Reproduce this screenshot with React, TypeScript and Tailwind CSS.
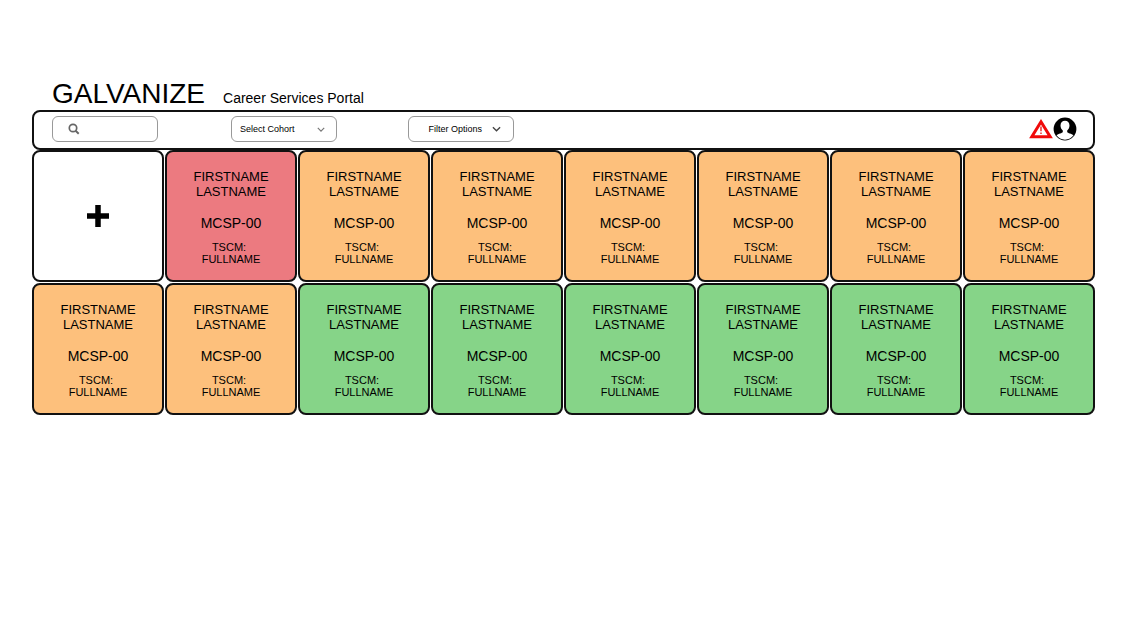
type Status = "red" | "orange" | "green";

const statuses: Status[] = [
  "red",
  ...Array<Status>(8).fill("orange"),
  ...Array<Status>(6).fill("green"),
];

const statusColors: Record<Status, string> = {
  red: "bg-[#ec7a80]",
  orange: "bg-[#fdc07c]",
  green: "bg-[#86d488]",
};

function Chevron({ className }: { className: string }) {
  return (
    <svg viewBox="0 0 10 6" fill="none" aria-hidden="true" className={className}>
      <path d="M1 1l4 4 4-4" stroke="currentColor" strokeWidth="1.5" />
    </svg>
  );
}

function SearchIcon() {
  return (
    <svg viewBox="0 0 12 12" fill="none" aria-hidden="true" className="size-3 shrink-0 text-[#666]">
      <circle cx="5" cy="5" r="3.7" stroke="currentColor" strokeWidth="1.7" />
      <path d="M7.6 7.8l3.1 3" stroke="currentColor" strokeWidth="1.9" />
    </svg>
  );
}

function AlertIcon() {
  return (
    <svg viewBox="0 0 24 20" aria-hidden="true" className="h-5 w-6">
      <path d="M12 2.800L21.200 17.700H2.800z" fill="#fff" stroke="#f00a0a" strokeWidth="3" />
      <path d="M12 7.500v4.700M12 13.600v1.500" stroke="#f00a0a" strokeWidth="1.300" />
    </svg>
  );
}

function ProfileIcon() {
  return (
    <svg viewBox="0 0 24 24" aria-hidden="true" className="size-6">
      <circle cx="12" cy="12" r="11.4" fill="#000" />
      <path
        d="M12 3.800c-2.700 0-4.500 1.900-4.500 4.600 0 2.300 1 4 2.300 5v1.500c-.6 1.400-4.300 1.500-6.300 3.400 1.900 2.700 5 4.400 8.500 4.400s6.600-1.700 8.500-4.400c-2-1.900-5.700-2-6.300-3.400v-1.500c1.300-1 2.300-2.700 2.300-5 0-2.700-1.800-4.600-4.500-4.600z"
        fill="#fff"
      />
    </svg>
  );
}

function StudentCard({ status }: { status: Status }) {
  return (
    <li className={`flex h-[132px] flex-col items-center rounded-lg border-2 border-[#111] pt-[17px] text-center ${statusColors[status]}`}>
      <h2 className="text-[13px] leading-[15px]">
        FIRSTNAME
        <br />
        LASTNAME
      </h2>
      <p className="mt-4 text-sm leading-4">MCSP-00</p>
      <p className="mt-2.5 text-[11px] leading-3">
        <span className="pr-1">TSCM:</span>
        <br />
        FULLNAME
      </p>
    </li>
  );
}

export default function App() {
  return (
    <div className="min-h-screen bg-white px-8 pt-[78px] font-['Liberation_Sans',Arial,sans-serif] text-black">
      <header>
        <div className="flex items-baseline gap-[18px] pl-5">
          <h1 className="text-[28px] leading-8">GALVANIZE</h1>
          <p className="text-sm">Career Services Portal</p>
        </div>
        <div className="flex h-10 items-center rounded-lg border-2 border-[#111] pr-4 pb-0.5 pl-[18px]">
          <label className="flex h-[26px] w-[106px] items-center rounded-md border border-[#999] pr-2 pl-[15px]">
            <SearchIcon />
            <input type="search" aria-label="Search students" className="ml-1 w-full min-w-0 text-[10px] outline-none" />
          </label>
          <div className="ml-[73px] grid w-[106px] items-center">
            <select aria-label="Select Cohort" className="col-start-1 row-start-1 h-[26px] w-full appearance-none rounded-md border border-[#999] bg-white pt-0.5 pl-2 text-[9px]">
              <option>Select Cohort</option>
            </select>
            <Chevron className="pointer-events-none col-start-1 row-start-1 mr-3 h-[5px] w-2 justify-self-end text-[#777]" />
          </div>
          <button type="button" className="ml-[71px] flex h-[26px] w-[106px] items-center justify-end gap-2.5 rounded-md border border-[#999] pr-3 text-[9px]">
            <span className="pt-0.5">Filter Options</span>
            <Chevron className="h-[6px] w-[9px] text-[#444]" />
          </button>
          <div className="ml-auto flex items-center">
            <button type="button" aria-label="Alerts">
              <AlertIcon />
            </button>
            <button type="button" aria-label="Profile">
              <ProfileIcon />
            </button>
          </div>
        </div>
      </header>
      <main>
        <ul className="grid grid-cols-8 gap-px">
          <li className="h-[132px]">
            <button type="button" aria-label="Add student" className="flex size-full items-center justify-center rounded-lg border-2 border-[#111]">
              <svg viewBox="0 0 22 22" aria-hidden="true" className="size-[22px]">
                <path d="M11 0v22M0 11h22" stroke="#000" strokeWidth="5.500" />
              </svg>
            </button>
          </li>
          {statuses.map((status, index) => (
            <StudentCard key={index} status={status} />
          ))}
        </ul>
      </main>
    </div>
  );
}
